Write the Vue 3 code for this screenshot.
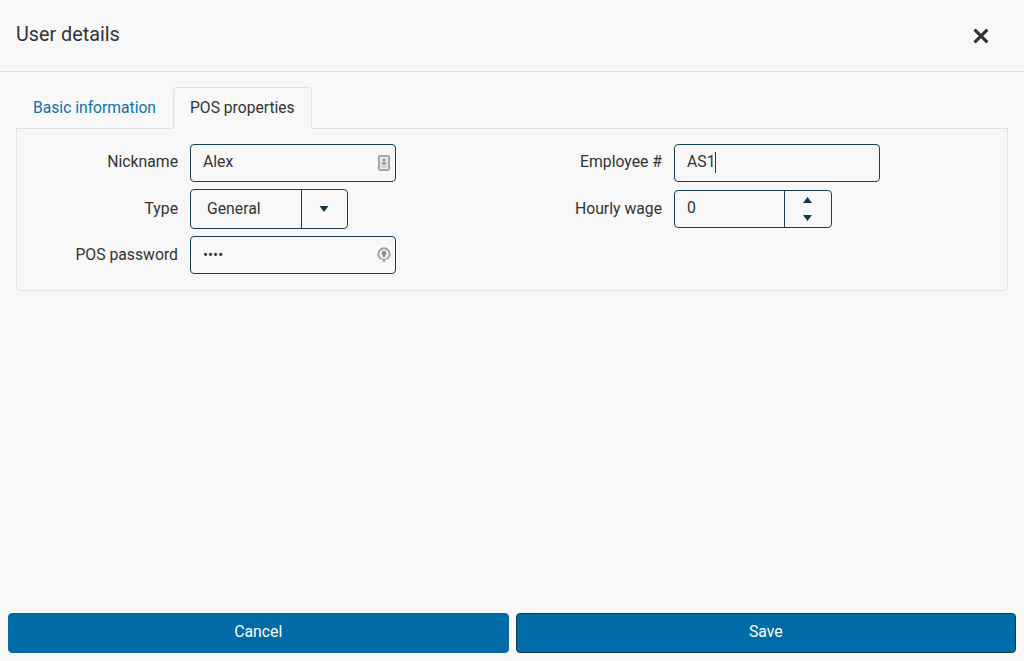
<script setup>
const leftLabel = 'Nickname'
</script>

<template>
  <div class="dialog">
    <header class="head">
      <h1 class="title">User details</h1>
      <button class="close" aria-label="Close">
        <svg width="16" height="16" viewBox="0 0 16 16"><path d="M1.600 1.600 14.400 14.400M14.400 1.600 1.600 14.400" stroke="#333" stroke-width="3.2" fill="none"/></svg>
      </button>
    </header>

    <main class="body">
      <nav class="tabs">
        <a class="tab">Basic information</a>
        <a class="tab active">POS properties</a>
      </nav>
      <section class="panel">
        <div class="col">
          <div class="row">
            <label class="lab up">{{ leftLabel }}</label>
            <div class="box wide">
              <span class="val up">Alex</span>
              <svg class="ico" width="12" height="16" viewBox="0 0 12 16">
                <rect x="0.9" y="0.9" width="10.2" height="14.2" rx="1" fill="#e6e6e6" stroke="#a3a3a3" stroke-width="1.8"/>
                <circle cx="6" cy="5" r="1.500" fill="#909090"/>
                <path d="M3.500 9.500c0-1.500 1-2.300 2.500-2.300s2.500.8 2.500 2.300z" fill="#909090"/>
                <path d="M3.500 11.800h5" stroke="#b5b5b5"/>
              </svg>
            </div>
          </div>
          <div class="row">
            <label class="lab">Type</label>
            <div class="box split type">
              <span class="val sel">General</span>
              <span class="side">
                <svg width="10" height="6" viewBox="0 0 10 6"><path d="M.5 0h9L5 6z" fill="#14394f"/></svg>
              </span>
            </div>
          </div>
          <div class="row">
            <label class="lab lift">POS password</label>
            <div class="box wide">
              <span class="val dots">••••</span>
              <svg class="ico key" width="14" height="16" viewBox="0 0 14 16">
                <path d="M4.200 11.800A5.600 5.600 0 1 1 9.800 11.800" fill="none" stroke="#a3a3a3" stroke-width="2"/>
                <circle cx="7" cy="6.200" r="2.400" fill="#8c8c8c"/>
                <path d="M5.800 7h2.400v3H5.800z" fill="#8c8c8c"/>
                <path d="M7 15.800 4.200 11.500h5.600z" fill="#a3a3a3"/>
              </svg>
            </div>
          </div>
        </div>
        <div class="col">
          <div class="row">
            <label class="lab up">Employee #</label>
            <div class="box wide">
              <span class="val up">AS1</span><span class="caret"></span>
            </div>
          </div>
          <div class="row">
            <label class="lab lift">Hourly wage</label>
            <div class="box split wage">
              <span class="val num">0</span>
              <span class="side spin">
                <svg width="9" height="6" viewBox="0 0 9 6"><path d="M4.500 0 9 6H0z" fill="#14394f"/></svg>
                <svg width="9" height="6" viewBox="0 0 9 6"><path d="M0 0h9L4.500 6z" fill="#14394f"/></svg>
              </span>
            </div>
          </div>
        </div>
      </section>
    </main>

    <footer class="foot">
      <button class="btn">Cancel</button>
      <button class="btn dark">Save</button>
    </footer>
  </div>
</template>

<style scoped>
.dialog {
  height: 661px;
  display: flex;
  flex-direction: column;
  background: #f8f8f8;
  color: #333;
  font-family: Roboto, "Liberation Sans", sans-serif;
  font-size: 15.75px;
}
.head {
  height: 71px;
  border-bottom: 1px solid #dfe3e6;
  display: flex;
  align-items: center;
  justify-content: space-between;
  padding: 0 35px 0 16px;
}
.title {
  margin: 0 0 1px;
  font-size: 19.75px;
  font-weight: 400;
  line-height: 28px;
}
.close {
  display: flex;
  padding: 0;
  border: 0;
  background: none;
}
.body {
  flex: 1;
  padding: 15px 16px 0;
}
.tabs {
  display: flex;
  height: 42px;
}
.tab {
  box-sizing: border-box;
  height: 42px;
  line-height: 39px;
  padding: 0 16px;
  color: #0b72ab;
  font-size: 15.65px;
  border: 1px solid transparent;
  border-radius: 4px 4px 0 0;
  white-space: nowrap;
}
.tab.active {
  color: #333;
  border-color: #dfe3e6;
  border-bottom-color: #f8f8f8;
  position: relative;
  z-index: 1;
}
.panel {
  box-sizing: border-box;
  margin-top: -1px;
  width: 992px;
  height: 163px;
  border: 1px solid #dfe3e6;
  border-radius: 0 0 4px 4px;
  padding: 15px 0 0;
  display: grid;
  grid-template-columns: 484px 484px;
}
.col {
  display: flex;
  flex-direction: column;
}
.row {
  display: flex;
  align-items: center;
  gap: 12px;
  margin-bottom: 7px;
}
.lab {
  width: 161px;
  line-height: 20px;
  text-align: right;
  white-space: nowrap;
}
.up {
  padding-bottom: 2px;
}
.lift {
  padding-bottom: 1px;
}
.box {
  box-sizing: border-box;
  border: 1px solid #1a4058;
  border-radius: 4px;
  height: 38px;
  display: flex;
  align-items: center;
}
.wide {
  width: 205.5px;
  padding-left: 12px;
  padding-right: 5px;
}
.split {
  width: 158px;
  align-items: stretch;
}
.type {
  height: 40px;
}
.wage {
  margin: 1px 0;
}
.val {
  line-height: 20px;
}
.sel,
.num {
  flex: 1;
  display: flex;
  align-items: center;
  padding-left: 16px;
}
.num {
  padding-left: 12px;
  padding-bottom: 2px;
}
.dots {
  font-size: 15px;
}
.caret {
  width: 1px;
  height: 21px;
  margin-bottom: 2px;
  background: #333;
}
.ico {
  margin-left: auto;
  flex: none;
}
.key {
  margin-right: -1px;
}
.side {
  box-sizing: border-box;
  border-left: 1px solid #1a4058;
  display: flex;
  align-items: center;
  justify-content: center;
}
.type .side {
  width: 46px;
  padding-right: 1px;
}
.wage .side {
  width: 47px;
  padding-right: 2px;
}
.spin {
  flex-direction: column;
  gap: 12px;
}
.foot {
  display: flex;
  gap: 7px;
  padding: 0 8px 8px;
}
.btn {
  flex: 1;
  height: 40px;
  box-sizing: border-box;
  border: 1px solid #006ba6;
  border-radius: 4px;
  background: #006ba6;
  color: #fff;
  font: inherit;
  padding: 0 0 3px;
}
.dark {
  border-color: #14394f;
}
</style>
